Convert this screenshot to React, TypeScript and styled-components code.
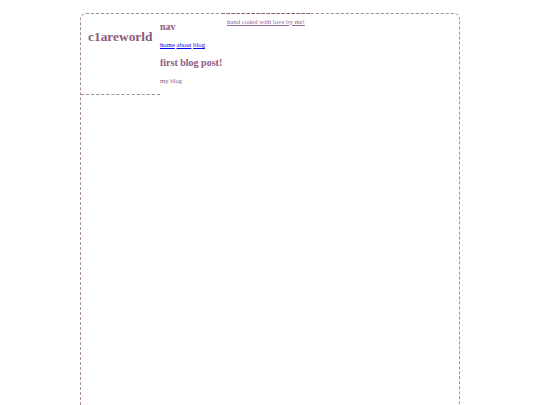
import React from 'react'
import styled, { createGlobalStyle } from 'styled-components'

const colors = {
	text: '#8b5a80',
	border: '#a88a9f',
	footerBorder: '#8b5a80',
	footerLink: '#8c6c9c',
	link: '#0000ee',
}

const GlobalStyle = createGlobalStyle`
	html, body {
		margin: 0;
		padding: 0;
		background: #ffffff;
	}
	body {
		font-family: "Liberation Serif", "Times New Roman", serif;
		font-size: 6.7px;
		color: ${colors.text};
	}
`

const navLinks = ['home', 'about', 'blog']

function App() {
	return (
		<>
			<GlobalStyle />
			<Page>
				<Sidebar>
					<Logo>c1areworld</Logo>
				</Sidebar>
				<Main>
					<Heading>nav</Heading>
					<Nav>
						{navLinks.map((link) => (
							<NavLink key={link} href="#">
								{link}
							</NavLink>
						))}
					</Nav>
					<PostTitle>first blog post!</PostTitle>
					<PostText>my blog</PostText>
				</Main>
				<Footer>
					<FooterLink href="#">hand coded with love by me!</FooterLink>
				</Footer>
			</Page>
		</>
	)
}

export default App

const Page = styled.div`
	position: relative;
	box-sizing: border-box;
	display: flex;
	align-items: flex-start;
	width: 380px;
	min-height: 420px;
	margin: 13px auto 0;
	border: 1px dashed ${colors.border};
	border-radius: 6px 6px 0 0;
`
const Sidebar = styled.div`
	box-sizing: border-box;
	width: 79px;
	height: 81px;
	padding: 15px 0 0 7px;
	border-bottom: 1px dashed ${colors.border};
`
const Logo = styled.h1`
	margin: 0;
	font-size: 13.4px;
	font-weight: bold;
	white-space: nowrap;
`
const Main = styled.div`
	display: flex;
	flex-direction: column;
	align-items: flex-start;
	padding-top: 7px;
`
const Heading = styled.h2`
	margin: 0;
	font-size: 10px;
	font-weight: bold;
`
const Nav = styled.nav`
	display: flex;
	gap: 1.7px;
	margin-top: 9.4px;
`
const NavLink = styled.a`
	color: ${colors.link};
	text-decoration: underline;
`
const PostTitle = styled(Heading)`
	margin-top: 8.2px;
`
const PostText = styled.p`
	margin: 9.8px 0 0;
`
const Footer = styled.footer`
	position: absolute;
	top: -1px;
	left: 141px;
	width: 88px;
	box-sizing: border-box;
	padding: 3.5px 0 0 5px;
	border-top: 1px dashed ${colors.footerBorder};
`
const FooterLink = styled.a`
	color: ${colors.footerLink};
	text-decoration: underline;
	white-space: nowrap;
`
